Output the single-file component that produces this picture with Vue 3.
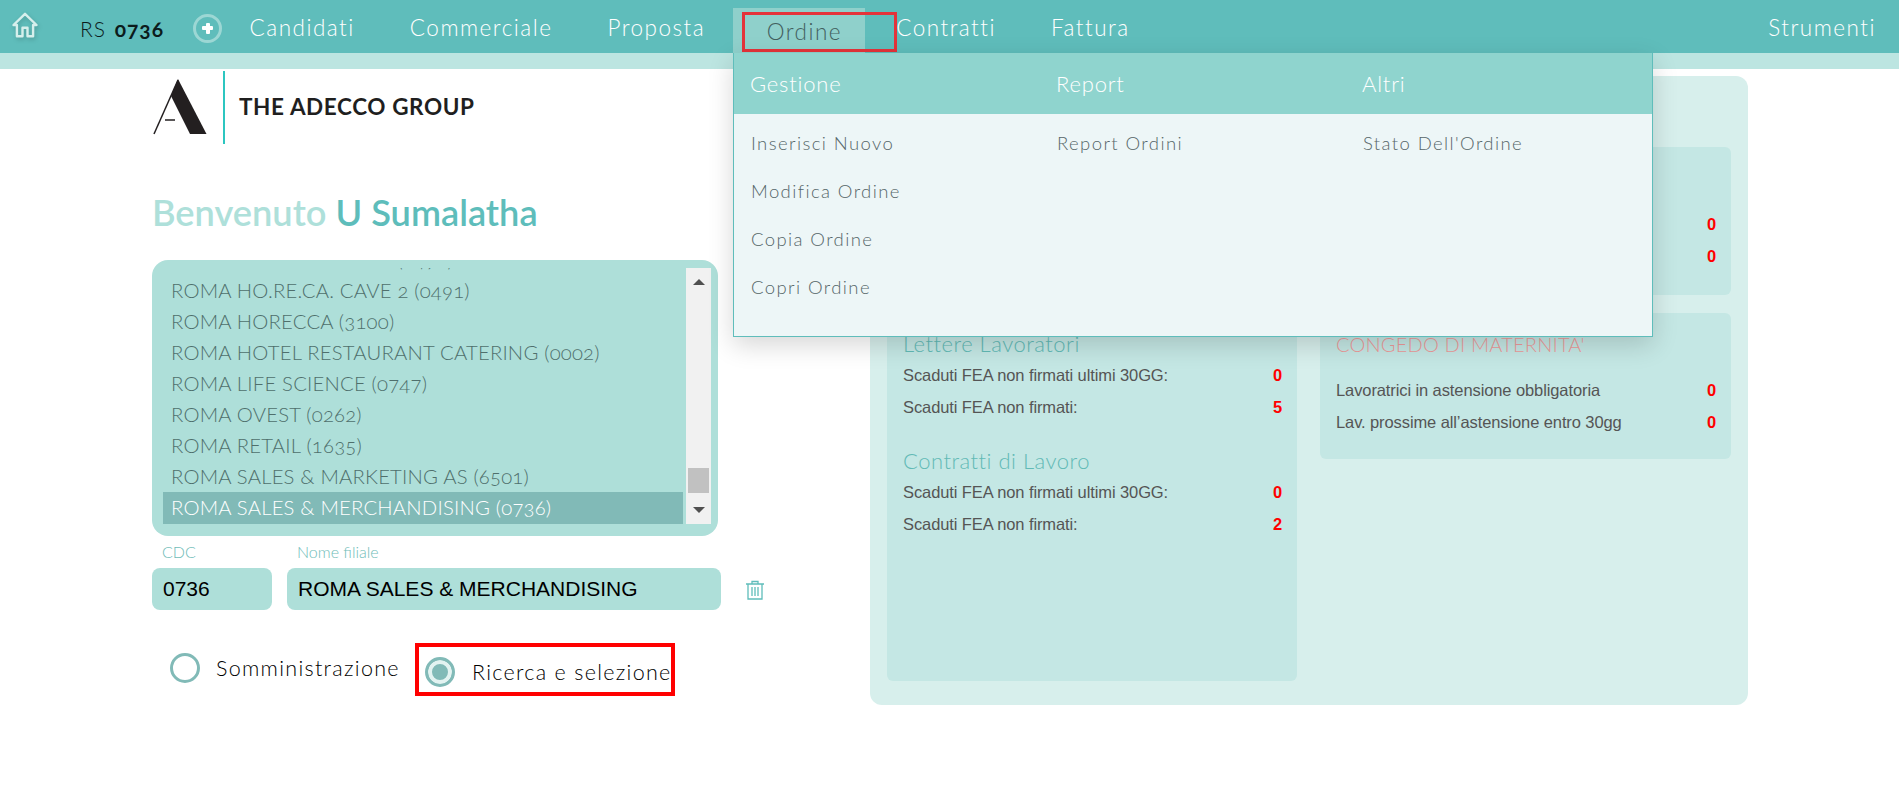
<script setup>
const navLeft = ['Candidati', 'Commerciale', 'Proposta']
const navRight = ['Contratti', 'Fattura']

const menuColumns = [
  { title: 'Gestione', items: ['Inserisci Nuovo', 'Modifica Ordine', 'Copia Ordine', 'Copri Ordine'] },
  { title: 'Report', items: ['Report Ordini'] },
  { title: 'Altri', items: ["Stato Dell'Ordine"] }
]

const branches = [
  'ROMA HO.RE.CA. CAVE (0490)',
  'ROMA HO.RE.CA. CAVE 2 (0491)',
  'ROMA HORECCA (3100)',
  'ROMA HOTEL RESTAURANT CATERING (0002)',
  'ROMA LIFE SCIENCE (0747)',
  'ROMA OVEST (0262)',
  'ROMA RETAIL (1635)',
  'ROMA SALES & MARKETING AS (6501)',
  'ROMA SALES & MERCHANDISING (0736)'
]
const selected = 'ROMA SALES & MERCHANDISING (0736)'

const lettere = [
  { label: 'Scaduti FEA non firmati ultimi 30GG:', value: 0 },
  { label: 'Scaduti FEA non firmati:', value: 5 }
]
const contratti = [
  { label: 'Scaduti FEA non firmati ultimi 30GG:', value: 0 },
  { label: 'Scaduti FEA non firmati:', value: 2 }
]
const congedo = [
  { label: 'Lavoratrici in astensione obbligatoria', value: 0 },
  { label: "Lav. prossime all’astensione entro 30gg", value: 0 }
]
</script>

<template>
  <div class="page">
    <header class="topbar">
      <svg class="home" viewBox="0 0 26 26" width="26" height="26">
        <path d="M1.5 13 13 1.8 24.5 13h-3.4v11.2h-5.6v-8.4h-5v8.4H4.900V13z" fill="none" stroke="#d6efec" stroke-width="2.400" stroke-linejoin="round" />
      </svg>
      <div class="rs">RS <b>0736</b></div>
      <div class="plus"><span></span></div>
      <a v-for="n in navLeft" :key="n" class="nav-item">{{ n }}</a>
      <a class="nav-tab">Ordine</a>
      <a v-for="n in navRight" :key="n" class="nav-item">{{ n }}</a>
      <a class="nav-item tools">Strumenti</a>

      <div class="mark"></div>

      <div class="dropdown">
        <div class="drop-head">
          <div v-for="c in menuColumns" :key="c.title" class="drop-col">{{ c.title }}</div>
        </div>
        <div class="drop-body">
          <div v-for="c in menuColumns" :key="c.title" class="drop-col">
            <div v-for="i in c.items" :key="i" class="drop-link">{{ i }}</div>
          </div>
        </div>
      </div>
    </header>
    <div class="band"></div>

    <main class="main">
      <section class="left">
        <div class="logo">
          <svg viewBox="0 0 54 56" width="54" height="56">
            <path d="M25 0 53.500 55H37L18 17z" fill="#231f20" />
            <path d="M25 1 1 55" fill="none" stroke="#231f20" stroke-width="1.500" />
            <path d="M12 41h10" fill="none" stroke="#231f20" stroke-width="1.500" />
          </svg>
          <i class="logo-line"></i>
          <span class="logo-text">THE ADECCO GROUP</span>
        </div>

        <h1 class="welcome"><span>Benvenuto</span> U Sumalatha</h1>

        <div class="list-box">
          <div class="list">
            <div class="options">
              <div v-for="b in branches" :key="b" class="option" :class="{ active: b === selected }">{{ b }}</div>
            </div>
            <div class="scrollbar">
              <i class="arrow up"></i>
              <i class="thumb"></i>
              <i class="arrow down"></i>
            </div>
          </div>
        </div>

        <div class="fields">
          <label class="field cdc">
            <span>CDC</span>
            <input type="text" value="0736" />
          </label>
          <label class="field name">
            <span>Nome filiale</span>
            <input type="text" value="ROMA SALES &amp; MERCHANDISING" />
          </label>
          <svg class="trash" viewBox="0 0 20 20" width="20" height="20" fill="none" stroke="#5fbdbb" stroke-width="1.300">
            <path d="M1 4h18M7 4V1.500h6V4M3 4v15h14V4M7 7v9M10 7v9M13 7v9" />
          </svg>
        </div>

        <div class="radios">
          <div class="radio"><i class="dot"></i><span>Somministrazione</span></div>
          <div class="radio second"><i class="dot on"></i><span>Ricerca e selezione</span></div>
        </div>
      </section>

      <section class="panel">
        <div class="card tall">
          <h3>Lettere Lavoratori</h3>
          <div v-for="r in lettere" :key="r.label" class="row"><span>{{ r.label }}</span><b>{{ r.value }}</b></div>
          <h3 class="second-title">Contratti di Lavoro</h3>
          <div v-for="r in contratti" :key="r.label" class="row"><span>{{ r.label }}</span><b>{{ r.value }}</b></div>
        </div>
        <div class="side">
          <div class="card small">
            <div class="row"><span></span><b>0</b></div>
            <div class="row"><span></span><b>0</b></div>
          </div>
          <div class="card mat">
            <h3 class="pink">CONGEDO DI MATERNITA'</h3>
            <div v-for="r in congedo" :key="r.label" class="row"><span>{{ r.label }}</span><b>{{ r.value }}</b></div>
          </div>
        </div>
      </section>
    </main>
  </div>
</template>

<style scoped>
.page {
  width: 1899px;
  height: 801px;
  overflow: hidden;
  background: #fff;
  font-family: Lato, "Liberation Sans", sans-serif;
  font-weight: 300;
  font-variant-numeric: oldstyle-nums;
}

.topbar {
  position: relative;
  z-index: 5;
  height: 53px;
  display: flex;
  align-items: center;
  background: #5fbdbb;
  color: #fff;
  font-size: 22.500px;
  letter-spacing: 1.500px;
}
.home {
  margin-left: 12px;
  margin-top: -4px;
  filter: drop-shadow(1px 2px 2px rgba(0, 0, 0, 0.18));
}
.rs {
  margin-left: 42px;
  margin-top: 3px;
  color: #0c1c1c;
  font-size: 21px;
  letter-spacing: 1px;
}
.rs b {
  font-weight: 700;
  margin-left: 2px;
}
.plus {
  position: relative;
  width: 29px;
  height: 29px;
  margin-left: 29px;
  margin-top: 3px;
  box-sizing: border-box;
  border: 3px solid #9cd7d4;
  border-radius: 50%;
}
.plus::before,
.plus span {
  content: '';
  position: absolute;
  background: #fff;
  border-radius: 1px;
}
.plus::before {
  left: 6px;
  top: 9.500px;
  width: 11px;
  height: 4px;
}
.plus span {
  left: 9.500px;
  top: 6px;
  width: 4px;
  height: 11px;
}
.nav-item {
  padding: 0 27.500px;
  margin-top: 2px;
}
.nav-tab {
  align-self: flex-end;
  height: 45px;
  line-height: 48px;
  width: 132px;
  box-sizing: border-box;
  padding-left: 34px;
  margin-right: 4px;
  background: #8fd0cb;
  color: #43605f;
}
.tools {
  margin-left: auto;
  padding-right: 23px;
}
.mark {
  position: absolute;
  left: 742px;
  top: 12px;
  width: 155px;
  height: 40px;
  box-sizing: border-box;
  border: 3px solid #e4333a;
}

.dropdown {
  position: absolute;
  left: 733px;
  top: 53px;
  width: 920px;
  box-sizing: border-box;
  border: 1px solid #5fbdbb;
  border-top: none;
  box-shadow: 0 8px 24px rgba(0, 0, 0, 0.16);
  letter-spacing: normal;
}
.drop-head {
  display: flex;
  height: 61px;
  align-items: center;
  background: #8fd4ce;
  color: #fff;
  font-size: 22px;
  letter-spacing: 0.800px;
}
.drop-col {
  width: 306px;
  padding-left: 16px;
  box-sizing: border-box;
}
.drop-body {
  display: flex;
  height: 222px;
  padding-top: 5px;
  box-sizing: border-box;
  background: #edf6f7;
  color: #566669;
  font-size: 18.500px;
  letter-spacing: 1.400px;
}
.drop-link {
  height: 48px;
  line-height: 48px;
  padding-left: 1px;
}

.band {
  height: 16px;
  background: #bce5e1;
}

.main {
  display: flex;
  padding-left: 152px;
}
.left {
  width: 718px;
  flex: none;
}
.logo {
  display: flex;
  align-items: center;
  height: 74px;
  margin-left: 1px;
  margin-top: 1px;
}
.logo-line {
  width: 2px;
  height: 73px;
  margin-left: 16px;
  background: #2cc6c0;
}
.logo-text {
  margin-left: 14px;
  font-family: Lato, sans-serif;
  font-weight: 700;
  font-size: 22.500px;
  letter-spacing: 0.600px;
  color: #1f1f1f;
  margin-top: -1px;
}
.welcome {
  margin: 45px 0 0;
  line-height: 46px;
  font-size: 36.200px;
  font-weight: 600;
  color: #5ebdbb;
  white-space: nowrap;
}
.welcome span {
  color: #aee0da;
}

.list-box {
  width: 566px;
  height: 276px;
  margin-top: 25px;
  padding: 8px 7px 12px 11px;
  box-sizing: border-box;
  background: #aedfd9;
  border-radius: 16px;
}
.list {
  display: flex;
  height: 256px;
  overflow: hidden;
}
.options {
  width: 520px;
  display: flex;
  flex-direction: column;
  justify-content: flex-end;
  overflow: hidden;
  height: 256px;
}
.option {
  flex: none;
  height: 31px;
  line-height: 31px;
  padding-left: 8px;
  font-size: 20.300px;
  letter-spacing: 0.200px;
  color: #4f6f6c;
  white-space: nowrap;
}
.option.active {
  background: #81bab7;
  color: #fff;
  height: 32px;
}
.scrollbar {
  position: relative;
  width: 25px;
  margin-left: 3px;
  background: #f1f1f1;
}
.thumb {
  position: absolute;
  left: 2px;
  right: 2px;
  top: 200px;
  height: 25px;
  background: #c1c1c1;
}
.arrow {
  position: absolute;
  left: 7px;
  width: 0;
  height: 0;
  border-left: 6px solid transparent;
  border-right: 6px solid transparent;
}
.arrow.up {
  top: 11px;
  border-bottom: 6px solid #505050;
}
.arrow.down {
  bottom: 11px;
  border-top: 6px solid #505050;
}

.fields {
  display: flex;
  align-items: flex-end;
  margin-top: 8px;
}
.field {
  display: flex;
  flex-direction: column;
}
.field span {
  height: 24px;
  line-height: 16px;
  padding-left: 10px;
  font-size: 16px;
  color: #6fbcb8;
}
.field input {
  height: 42px;
  width: 100%;
  box-sizing: border-box;
  padding: 0 0 0 11px;
  border: none;
  border-radius: 8px;
  background: #aedfd9;
  color: #000;
  font-family: "Liberation Sans", Arial, sans-serif;
  font-size: 21px;
}
.cdc {
  width: 120px;
}
.name {
  width: 434px;
  margin-left: 15px;
}
.trash {
  margin-left: 24px;
  margin-bottom: 10px;
}

.radios {
  display: flex;
  margin-top: 43px;
  margin-left: 18px;
  align-items: flex-start;
  color: #000;
  font-size: 21.500px;
  letter-spacing: 1.300px;
  font-weight: 300;
}
.radio {
  display: flex;
  align-items: center;
  width: 255px;
  height: 29px;
}
.radio.second {
  position: relative;
  margin-top: 4px;
  width: 260px;
}
.radio.second::after {
  content: '';
  position: absolute;
  left: -10px;
  top: -14px;
  width: 260px;
  height: 53px;
  box-sizing: border-box;
  border: 4px solid #f00;
}
.dot {
  flex: none;
  width: 30px;
  height: 30px;
  margin-right: 16px;
  box-sizing: border-box;
  border: 3px solid #81bab7;
  border-radius: 50%;
  background: #fff;
}
.second .dot {
  margin-right: 17px;
}
.dot.on {
  background: #81bab7;
  box-shadow: inset 0 0 0 4px #e3f3f1;
}

.panel {
  display: flex;
  gap: 23px;
  width: 878px;
  height: 629px;
  margin-top: 7px;
  padding: 71px 17px 0 17px;
  box-sizing: border-box;
  background: #d7efec;
  border-radius: 12px;
}
.card {
  background: #c4e7e4;
  border-radius: 6px;
  box-sizing: border-box;
  padding: 0 18px 0 16px;
}
.card h3 {
  margin: 0;
  font-size: 22px;
  font-weight: 300;
  line-height: 30px;
  color: #62bab6;
  letter-spacing: 0.500px;
}
.tall {
  width: 410px;
  height: 534px;
  padding-top: 182px;
}
.card .second-title {
  margin-top: 23px;
}
.side {
  width: 411px;
}
.small {
  height: 148px;
  padding-top: 61px;
}
.mat {
  height: 146px;
  margin-top: 18px;
  padding-top: 16px;
}
.card .pink {
  color: #ec9a9a;
  margin-bottom: 15px;
  font-size: 20px;
  letter-spacing: 0.200px;
}
.row {
  display: flex;
  justify-content: space-between;
  align-items: center;
  height: 32px;
  font-family: "Liberation Sans", Arial, sans-serif;
  font-weight: 400;
  font-variant-numeric: normal;
  font-size: 16.500px;
  letter-spacing: -0.100px;
  color: #555;
}
.row b {
  font-size: 16.500px;
  color: #f00;
  margin-right: -3px;
}
</style>

<style>
html, body {
  margin: 0;
  overflow: hidden;
}
</style>
